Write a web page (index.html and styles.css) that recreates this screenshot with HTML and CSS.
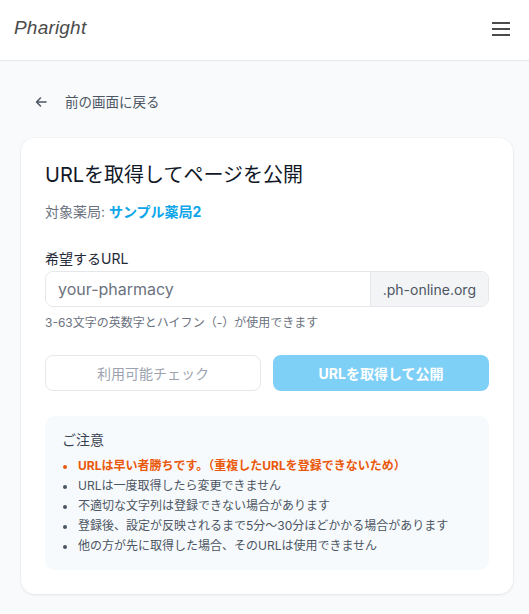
FILE: index.html
```html
<!DOCTYPE html>
<html lang="ja">
<head>
<meta charset="utf-8">
<title>Pharight</title>
<link rel="stylesheet" href="styles.css">
</head>
<body>
<header class="header">
  <div class="logo">Pharight</div>
  <button class="menu" aria-label="menu">
    <svg width="18" height="14" viewBox="0 0 18 14"><rect x="0" y="0" width="18" height="2" fill="#4b4b4b"/><rect x="0" y="6" width="18" height="2" fill="#4b4b4b"/><rect x="0" y="12" width="18" height="2" fill="#4b4b4b"/></svg>
  </button>
</header>
<main class="main">
  <a class="back" href="#">
    <svg width="14" height="14" viewBox="0 0 14 14"><path d="M12 7H2.5M6.5 3L2.5 7l4 4" fill="none" stroke="#4b5563" stroke-width="1.5" stroke-linecap="round" stroke-linejoin="round"/></svg>
    <span>前の画面に戻る</span>
  </a>
  <section class="card">
    <h1 class="title">URLを取得してページを公開</h1>
    <p class="target">対象薬局: <strong>サンプル薬局2</strong></p>
    <label class="label" for="url">希望するURL</label>
    <div class="input-group">
      <input id="url" class="input" type="text" placeholder="your-pharmacy">
      <span class="suffix">.ph-online.org</span>
    </div>
    <p class="help">3-63文字の英数字とハイフン（-）が使用できます</p>
    <div class="actions">
      <button class="btn btn-outline">利用可能チェック</button>
      <button class="btn btn-primary">URLを取得して公開</button>
    </div>
    <div class="notice">
      <h2 class="notice-title">ご注意</h2>
      <ul class="notice-list">
        <li class="warn">URLは早い者勝ちです。（重複したURLを登録できないため）</li>
        <li>URLは一度取得したら変更できません</li>
        <li>不適切な文字列は登録できない場合があります</li>
        <li>登録後、設定が反映されるまで5分〜30分ほどかかる場合があります</li>
        <li>他の方が先に取得した場合、そのURLは使用できません</li>
      </ul>
    </div>
  </section>
</main>
</body>
</html>
```
FILE: styles.css
```css
* { box-sizing: border-box; }
html, body { margin: 0; padding: 0; }
body {
  background: #f9fafb;
  font-family: Inter, "Noto Sans CJK JP", sans-serif;
  color: #111827;
}
.header {
  height: 61px;
  background: #fff;
  border-bottom: 1px solid #e5e7eb;
  display: flex;
  align-items: center;
  justify-content: space-between;
  padding: 0 19px 0 14px;
}
.logo {
  font-family: "Liberation Sans", Arial, sans-serif;
  font-style: italic;
  font-size: 19px;
  color: #4b4b4b;
  letter-spacing: 0.2px;
  margin-top: -4px;
}
.menu {
  border: 0;
  background: none;
  padding: 0;
  display: flex;
  margin-top: -2px;
}
.main {
  padding: 31px 16px 20px 21px;
}
.back {
  display: flex;
  align-items: center;
  gap: 17px;
  padding-left: 13px;
  color: #4b5563;
  text-decoration: none;
  font-size: 13.5px;
  line-height: 20px;
}
.card {
  margin-top: 26px;
  background: #fff;
  border-radius: 14px;
  box-shadow: 0 1px 3px rgba(0,0,0,0.08), 0 0 0 1px rgba(0,0,0,0.02);
  padding: 22px 24px 24px 24px;
}
.title {
  margin: 0;
  font-size: 20px;
  font-weight: 400;
  line-height: 30px;
  color: #111827;
}
.target {
  margin: 12px 0 0;
  font-size: 14px;
  line-height: 20px;
  color: #6b7280;
}
.target strong {
  color: #0ea5e9;
  font-weight: 700;
}
.label {
  display: block;
  margin-top: 27px;
  font-size: 14px;
  line-height: 20px;
  color: #1f2937;
}
.input-group {
  margin-top: 2px;
  display: flex;
  height: 36px;
  border: 1px solid #e5e7eb;
  border-radius: 8px;
  overflow: hidden;
}
.input {
  flex: 1;
  min-width: 0;
  border: 0;
  outline: none;
  padding: 0 12px;
  font-family: Inter, "Noto Sans CJK JP", sans-serif;
  font-size: 16px;
  color: #111827;
  background: #fff;
}
.input::placeholder { color: #6b7280; }
.suffix {
  display: flex;
  align-items: center;
  padding: 0 12px;
  background: #f3f4f6;
  border-left: 1px solid #e5e7eb;
  font-size: 14px;
  color: #4b5563;
}
.help {
  margin: 8px 0 0;
  font-size: 12px;
  line-height: 16px;
  color: #6b7280;
}
.actions {
  margin-top: 24px;
  display: grid;
  grid-template-columns: 1fr 1fr;
  gap: 12px;
}
.btn {
  height: 36px;
  border-radius: 8px;
  font-family: Inter, "Noto Sans CJK JP", sans-serif;
  font-size: 14px;
}
.btn-outline {
  background: #fff;
  border: 1px solid #e5e7eb;
  color: #9ca3af;
}
.btn-primary {
  border: 0;
  background: #7fd0f7;
  color: #fff;
  font-weight: 700;
}
.notice {
  margin-top: 25px;
  background: #f7fafc;
  border-radius: 10px;
  padding: 14px 16px 14px 17px;
}
.notice-title {
  margin: 0;
  font-size: 14px;
  font-weight: 400;
  line-height: 20px;
  color: #374151;
}
.notice-list {
  list-style: none;
  margin: 6px 0 0;
  padding: 0;
}
.notice-list li {
  position: relative;
  padding-left: 16px;
  font-size: 12px;
  line-height: 20px;
  color: #4b5563;
}
.notice-list li::before {
  content: "";
  position: absolute;
  left: 1px;
  top: 9px;
  width: 4px;
  height: 4px;
  border-radius: 50%;
  background: currentColor;
}
.notice-list li.warn {
  color: #ea580c;
  font-weight: 700;
}
```
